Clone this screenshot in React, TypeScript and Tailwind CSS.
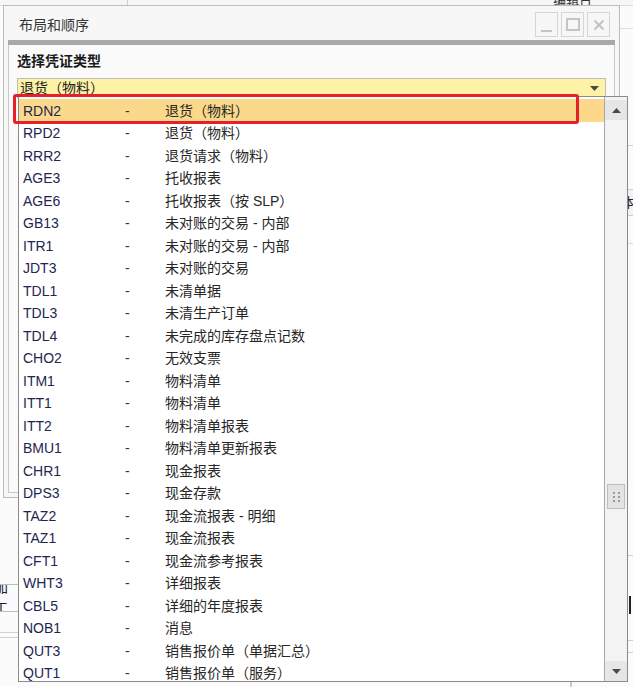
import React from "react";

const rows: [string, string][] = [
  ["RDN2", "退货（物料）"],
  ["RPD2", "退货（物料）"],
  ["RRR2", "退货请求（物料）"],
  ["AGE3", "托收报表"],
  ["AGE6", "托收报表（按 SLP）"],
  ["GB13", "未对账的交易 - 内部"],
  ["ITR1", "未对账的交易 - 内部"],
  ["JDT3", "未对账的交易"],
  ["TDL1", "未清单据"],
  ["TDL3", "未清生产订单"],
  ["TDL4", "未完成的库存盘点记数"],
  ["CHO2", "无效支票"],
  ["ITM1", "物料清单"],
  ["ITT1", "物料清单"],
  ["ITT2", "物料清单报表"],
  ["BMU1", "物料清单更新报表"],
  ["CHR1", "现金报表"],
  ["DPS3", "现金存款"],
  ["TAZ2", "现金流报表 - 明细"],
  ["TAZ1", "现金流报表"],
  ["CFT1", "现金流参考报表"],
  ["WHT3", "详细报表"],
  ["CBL5", "详细的年度报表"],
  ["NOB1", "消息"],
  ["QUT3", "销售报价单（单据汇总）"],
  ["QUT1", "销售报价单（服务）"],
];

function TitleButton({ kind }: { kind: "min" | "max" | "close" }) {
  return (
    <div className="flex h-[25px] w-[23px] items-center justify-center border border-[#d6d6d6] bg-[#f7f7f7]">
      {kind === "min" && <div className="mt-[12px] h-[2px] w-[11px] bg-[#c4c4c4]" />}
      {kind === "max" && <div className="h-[13px] w-[14px] border-2 border-[#c4c4c4]" />}
      {kind === "close" && (
        <svg width="12" height="12" viewBox="0 0 12 12">
          <path d="M1.5 1.5L10.5 10.5M10.5 1.5L1.5 10.5" stroke="#c4c4c4" strokeWidth="2.2" />
        </svg>
      )}
    </div>
  );
}

function Tri({ up }: { up?: boolean }) {
  return (
    <svg width="9" height="5" viewBox="0 0 9 5">
      <path d={up ? "M0 5L4.5 0L9 5Z" : "M0 0L9 0L4.5 5Z"} fill="#4a4a4a" />
    </svg>
  );
}

export default function App() {
  return (
    <div
      className="relative h-[687px] w-[633px] overflow-hidden bg-[#fbfbfb] text-[14px]"
      style={{ fontFamily: '"Liberation Sans", "Noto Sans CJK SC", sans-serif' }}
    >
      {/* background window */}
      <div className="flex h-[6px] border-b border-[#dcdcdc] bg-[#f6f6f6]">
        <div className="w-[128px] border-r border-[#cfcfcf]" />
        <div className="flex-1" />
      </div>
      <div className="absolute left-[553px] top-[-9px] text-[13px] text-[#333]">编辑日</div>
      <div className="absolute right-0 top-[28px] w-[14px] border-t border-[#dcdcdc]" />
      <div className="absolute right-0 top-[145px] h-[1px] w-[14px] bg-[#d0d0d0]" />
      <div className="absolute right-0 top-[189px] flex h-[27px] w-[14px] items-center overflow-hidden border-y border-[#d0d0d0] bg-[#f2f2f2]">
        <span className="ml-[3px] text-[13px] text-[#222]">本</span>
      </div>
      <div className="absolute right-0 top-[243px] h-[1px] w-[14px] bg-[#d8d8d8]" />
      <div className="absolute right-0 top-[555px] h-[1px] w-[14px] bg-[#d0d0d0]" />
      <div className="absolute right-[2px] top-[596px] h-[18px] w-[2px] bg-[#222]" />
      <div className="absolute right-0 top-[640px] h-[1px] w-[14px] bg-[#d0d0d0]" />
      <div className="absolute right-0 top-[652px] h-[1px] w-[14px] bg-[#d0d0d0]" />
      <div className="absolute left-0 top-[584px] flex h-[28px] w-[20px] items-center overflow-hidden border-y border-[#bdbdbd]">
        <span className="ml-[-6px] text-[14px] text-[#222]">加工</span>
      </div>
      <div className="absolute left-0 top-[632px] h-[1px] w-[20px] bg-[#d0d0d0]" />
      <div className="absolute left-0 top-[637px] h-[1px] w-[20px] bg-[#d0d0d0]" />
      <div className="absolute left-[570px] top-[681px] h-[8px] w-[2px] bg-[#c8c8c8]" />

      {/* dialog */}
      <div className="absolute left-[3px] top-[5px] flex h-[493px] w-[617px] flex-col border border-[#bcbcbc] bg-[#f7f7f7]">
        <div className="flex h-[34px] items-center justify-between pl-[15px] pr-[9px]">
          <span className="mt-[5px] text-[14px] text-[#333]">布局和顺序</span>
          <div className="mt-[3px] flex gap-[3px]">
            <TitleButton kind="min" />
            <TitleButton kind="max" />
            <TitleButton kind="close" />
          </div>
        </div>
        <div className="mx-[4px] h-[5px] bg-[#a9a9a9]" />
        <div className="mx-[4px] mb-[4px] flex flex-1 flex-col border-x border-b border-[#c8c8c8] bg-[#fafafa] px-[8px]">
          <div className="mt-[6px] text-[14px] font-bold text-[#1a1a1a]">选择凭证类型</div>
          <div className="mt-[6px] flex h-[20px] items-center justify-between border border-[#bdbdbd] bg-[#fdf2a6] pl-[2px] pr-[6px]">
            <span className="text-[14px] leading-none text-[#222]">退货（物料）</span>
            <Tri />
          </div>
        </div>
      </div>

      {/* dropdown popup */}
      <div className="absolute left-[18px] top-[96px] flex h-[586px] w-[610px] border border-[#8a8a8a] bg-white">
        <div className="flex-1 pt-[2px]">
          {rows.map(([code, desc], i) => (
            <div
              key={i}
              className={
                "flex h-[22.5px] items-center pl-[4px] pt-[2px] " +
                (i === 0 ? "bg-[#fcd98a]" : "")
              }
            >
              <span className="w-[102px] text-[#1e2650]">{code}</span>
              <span className="w-[40px] text-[#333]">-</span>
              <span className="text-[#262626]">{desc}</span>
            </div>
          ))}
        </div>
        <div className="flex w-[23px] flex-col border-l border-[#a8a8a8] bg-[#f3f3f3]">
          <div className="mt-[3px] flex h-[20px] items-center justify-center bg-[#e6e6e6]">
            <Tri up />
          </div>
          <div className="h-[364px]" />
          <div className="mx-[2px] flex h-[25px] items-center justify-center border border-[#bdbdbd] bg-[#e3e3e3]">
            <div className="grid grid-cols-2 gap-x-[3px] gap-y-[2px]">
              {[0, 1, 2, 3, 4, 5].map((d) => (
                <div key={d} className="h-[2px] w-[2px] bg-[#9a9a9a]" />
              ))}
            </div>
          </div>
          <div className="flex-1" />
          <div className="flex h-[20px] items-center justify-center bg-[#e6e6e6]">
            <Tri />
          </div>
        </div>
      </div>

      {/* red highlight frame */}
      <div className="absolute left-[13px] top-[94px] h-[30px] w-[566px] rounded-[3px] border-[3px] border-[#e5202b]" />
    </div>
  );
}
